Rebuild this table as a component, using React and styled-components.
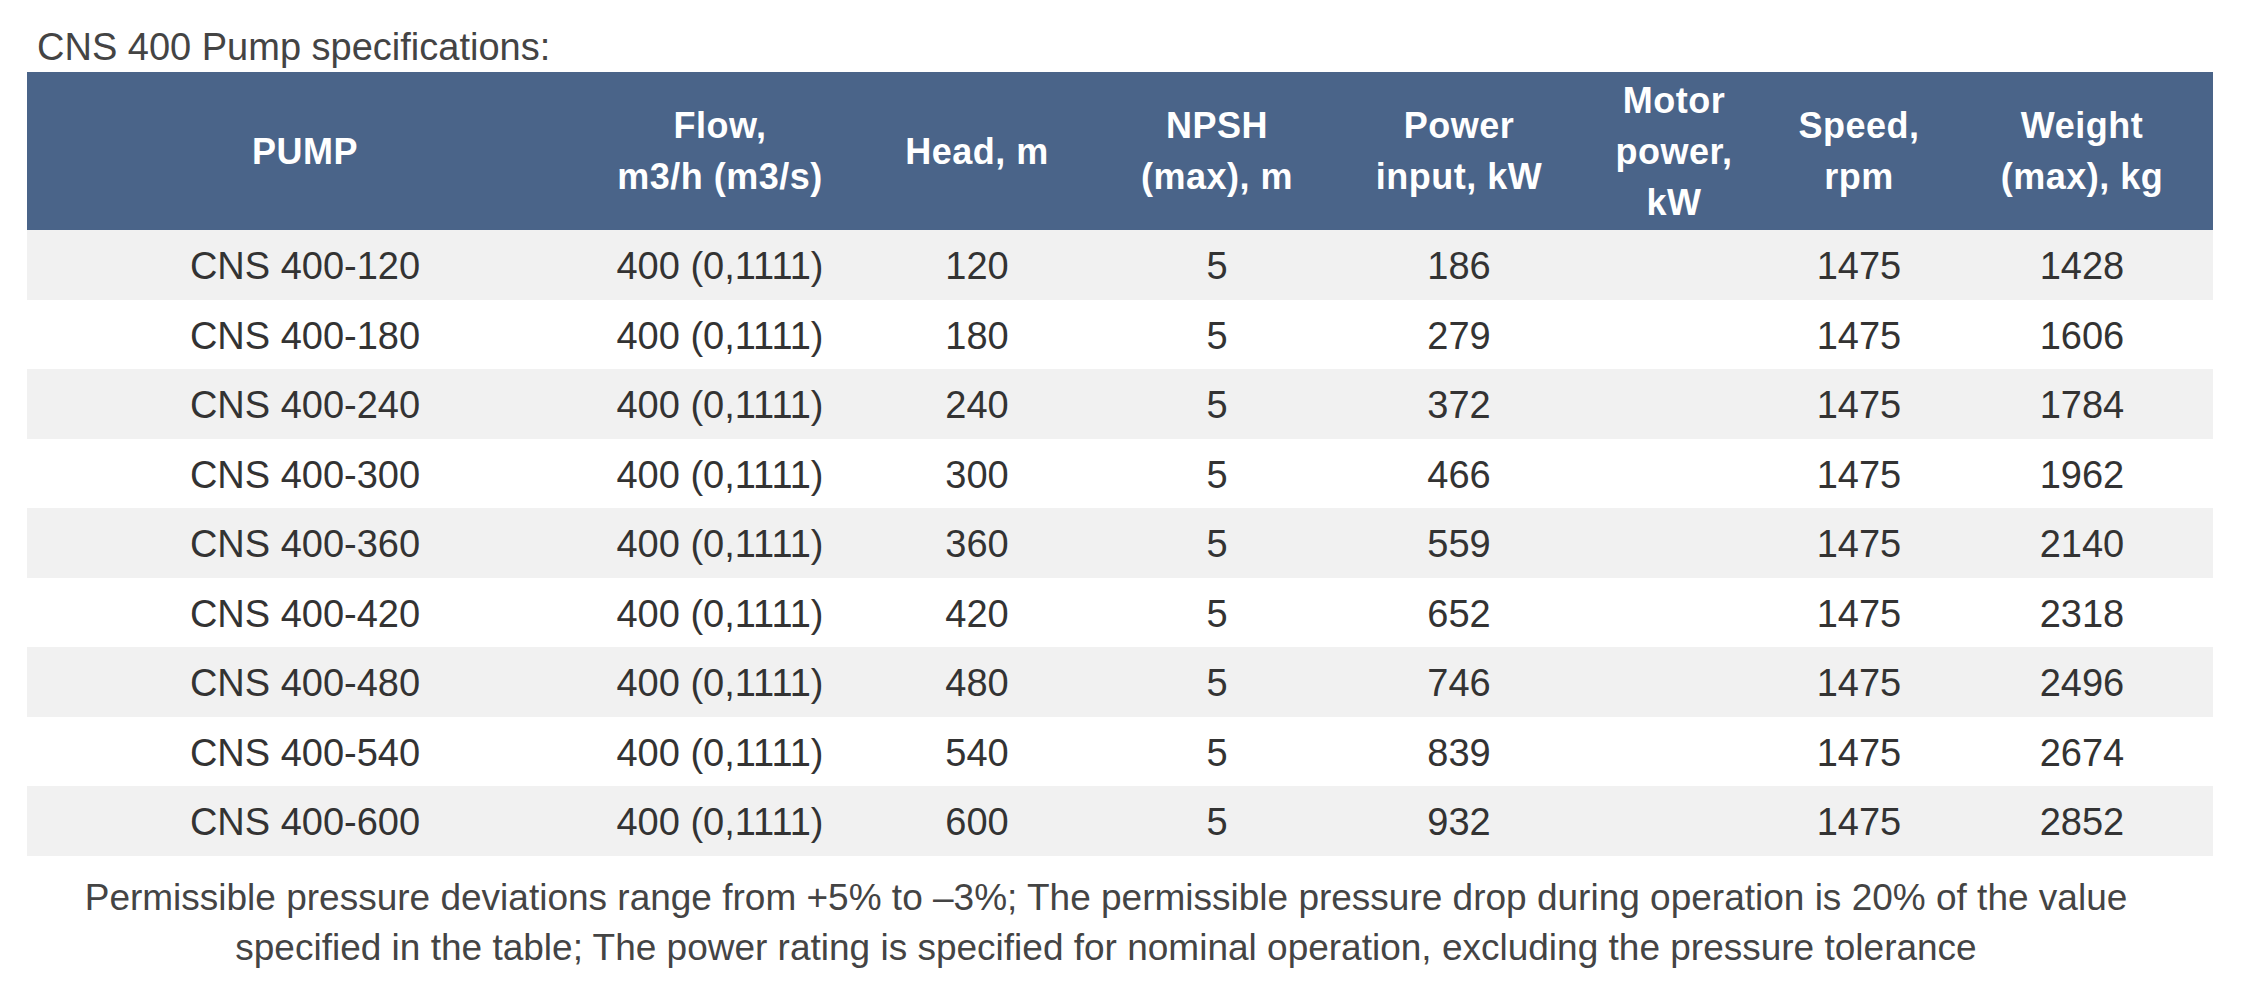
import React from "react";
import styled, { createGlobalStyle } from "styled-components";

const GlobalStyle = createGlobalStyle`
  html, body {
    margin: 0;
    padding: 0;
    background: #ffffff;
  }
  body {
    font-family: "Liberation Sans", Arial, sans-serif;
  }
`;

const columns = [
  { key: "pump", title: ["PUMP"], width: 556 },
  { key: "flow", title: ["Flow,", "m3/h (m3/s)"], width: 274 },
  { key: "head", title: ["Head, m"], width: 240 },
  { key: "npsh", title: ["NPSH", "(max), m"], width: 240 },
  { key: "power", title: ["Power", "input, kW"], width: 244 },
  { key: "motor", title: ["Motor", "power,", "kW"], width: 186 },
  { key: "speed", title: ["Speed,", "rpm"], width: 184 },
  { key: "weight", title: ["Weight", "(max), kg"], width: 262 },
];

const rows = [
  ["CNS 400-120", "400 (0,1111)", "120", "5", "186", "", "1475", "1428"],
  ["CNS 400-180", "400 (0,1111)", "180", "5", "279", "", "1475", "1606"],
  ["CNS 400-240", "400 (0,1111)", "240", "5", "372", "", "1475", "1784"],
  ["CNS 400-300", "400 (0,1111)", "300", "5", "466", "", "1475", "1962"],
  ["CNS 400-360", "400 (0,1111)", "360", "5", "559", "", "1475", "2140"],
  ["CNS 400-420", "400 (0,1111)", "420", "5", "652", "", "1475", "2318"],
  ["CNS 400-480", "400 (0,1111)", "480", "5", "746", "", "1475", "2496"],
  ["CNS 400-540", "400 (0,1111)", "540", "5", "839", "", "1475", "2674"],
  ["CNS 400-600", "400 (0,1111)", "600", "5", "932", "", "1475", "2852"],
];

function App() {
  return (
    <Page>
      <GlobalStyle />
      <Title>CNS 400 Pump specifications:</Title>
      <Table>
        <colgroup>
          {columns.map((col) => (
            <Col key={col.key} $w={col.width} />
          ))}
        </colgroup>
        <thead>
          <tr>
            {columns.map((col) => (
              <HeadCell key={col.key}>
                {col.title.map((line, i) => (
                  <HeadLine key={i}>{line}</HeadLine>
                ))}
              </HeadCell>
            ))}
          </tr>
        </thead>
        <tbody>
          {rows.map((row, id) => (
            <Row key={id} $striped={id % 2 === 0}>
              {row.map((value, i) => (
                <Cell key={i}>{value}</Cell>
              ))}
            </Row>
          ))}
        </tbody>
      </Table>
      <Note>
        Permissible pressure deviations range from +5% to –3%; The permissible pressure drop during operation is 20% of the value
        <br />
        specified in the table; The power rating is specified for nominal operation, excluding the pressure tolerance
      </Note>
    </Page>
  );
}

const Page = styled.div`
  width: 2247px;
  padding: 25px 0 0 27px;
  box-sizing: border-box;
`;

const Title = styled.div`
  font-family: "Liberation Sans", Arial, sans-serif;
  font-size: 38px;
  line-height: 44px;
  height: 44px;
  color: #444444;
  padding-left: 10px;
  margin-bottom: 3px;
`;

const Table = styled.table`
  width: 2186px;
  table-layout: fixed;
  border-collapse: collapse;
  border-spacing: 0;
`;

const Col = styled.col`
  width: ${(p) => p.$w}px;
`;

const HeadCell = styled.th`
  height: 158px;
  padding: 0;
  background: #4a6489;
  color: #ffffff;
  font-family: "Liberation Sans", Arial, sans-serif;
  font-weight: bold;
  font-size: 36px;
  letter-spacing: 0.5px;
  line-height: 51px;
  text-align: center;
  vertical-align: middle;
`;

const HeadLine = styled.div`
  white-space: nowrap;
`;

const Row = styled.tr`
  height: 69.5px;
  background: ${(p) => (p.$striped ? "#f1f1f1" : "#ffffff")};
`;

const Cell = styled.td`
  padding: 4px 0 0;
  font-family: "Liberation Sans", Arial, sans-serif;
  font-size: 38px;
  color: #333333;
  text-align: center;
  vertical-align: middle;
  white-space: nowrap;
`;

const Note = styled.div`
  width: 2186px;
  margin-top: 17px;
  padding-right: 28px;
  box-sizing: border-box;
  font-family: "Liberation Sans", Arial, sans-serif;
  font-size: 37px;
  line-height: 50px;
  color: #444444;
  text-align: center;
  white-space: nowrap;
`;

export default App;
